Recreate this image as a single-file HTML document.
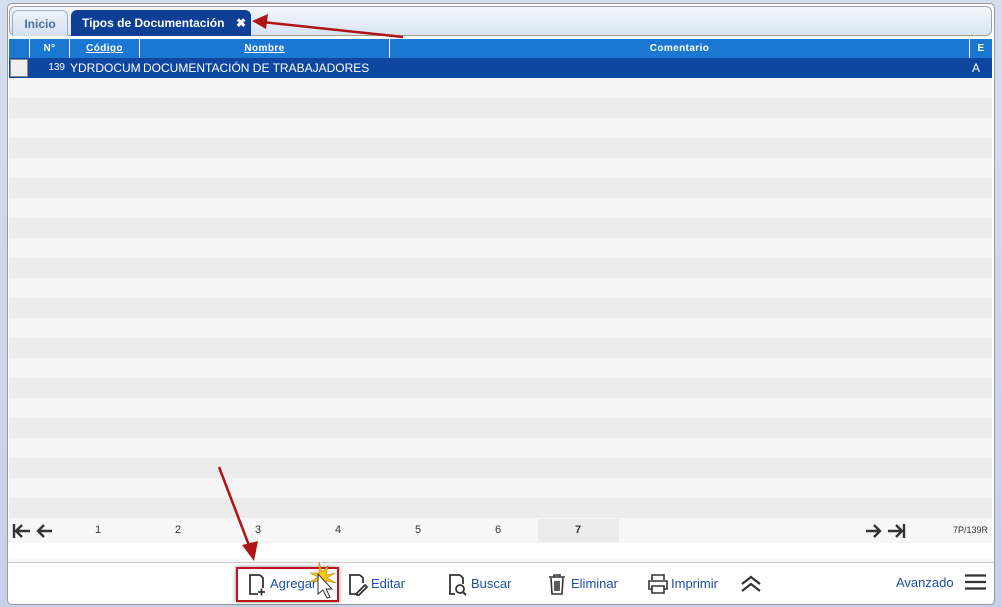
<!DOCTYPE html><html><head><style>
*{margin:0;padding:0;box-sizing:border-box}
body{width:1002px;height:607px;background:linear-gradient(#d5deef,#c5d1ea);font-family:"Liberation Sans",sans-serif;position:relative;overflow:hidden}
.panel{position:absolute;left:7px;top:3px;width:988px;height:602px;background:#fff;border:1px solid #999;border-radius:5px}
.tabbar{position:absolute;left:9px;top:6px;width:983px;height:30px;border:1px solid #a0a0a0;border-radius:6px;background:linear-gradient(#f4f7fc,#d8e4f3)}
.tab{position:absolute;top:10px;height:26px;border-radius:6px 6px 0 0;font-size:12px;font-weight:bold;line-height:26px}
.t1{left:12px;width:56px;background:linear-gradient(#eef3fa,#d3dff0);border:1px solid #9fb0c6;border-bottom:none;color:#4a6f9a;text-align:center}
.t2{left:71px;width:180px;background:#0d3f95;color:#fff;padding-left:11px}
.hdr{position:absolute;left:9px;top:39px;width:983px;height:19px;background:#1a77d2;color:#fff;font-size:10px;font-weight:bold;letter-spacing:.4px}
.hdr div,.sel div{position:absolute;top:0;height:19px;line-height:19px;text-align:center}
.hdr div{border-left:1px solid #fff}
.sel{position:absolute;left:9px;top:58px;width:983px;height:20px;background:#0d47a1;color:#fff;font-size:12px}
.sel div{line-height:20px}
.rows{position:absolute;left:9px;top:78px;width:983px;height:440px;background:repeating-linear-gradient(#f5f5f5 0 20px,#ececec 20px 40px)}
.pag{position:absolute;left:9px;top:518px;width:983px;height:25px;background:#f7f7f7;font-size:11px;color:#333}
.pag span{position:absolute;top:6px}
.tb{position:absolute;left:8px;top:562px;width:986px;height:1px;background:#ccc;box-shadow:0 -2px 3px #ddd}
.bt{position:absolute;top:576px;font-size:13px;color:#1c4fa8}
svg{position:absolute}
</style></head><body>
<div class="panel"></div>
<div class="tabbar"></div>
<div class="tab t1">Inicio</div>
<div class="tab t2">Tipos de Documentación<span style="position:absolute;left:165px">✖</span></div>
<svg width="1002" height="607" style="left:0;top:0;z-index:5"><line x1="403" y1="37" x2="262" y2="22" stroke="#b01515" stroke-width="2.5"/><polygon points="252,21 268,14 266,29" fill="#b01515"/>
<line x1="219" y1="467" x2="250" y2="548" stroke="#b01515" stroke-width="2.5"/><polygon points="254,561 242,545 258,541" fill="#b01515"/></svg>
<div class="hdr"><div style="left:20px;width:40px">N°</div><div style="left:60px;width:70px;text-decoration:underline">Código</div><div style="left:130px;width:250px;text-decoration:underline">Nombre</div><div style="left:380px;width:580px">Comentario</div><div style="left:960px;width:23px">E</div></div>
<div class="sel"><div style="left:1px;top:1px;width:18px;height:18px;background:#eee;border:1px solid #888"></div><div style="left:20px;width:36px;text-align:right;font-size:10px">139</div><div style="left:61px">YDRDOCUM</div><div style="left:134px">DOCUMENTACIÓN DE TRABAJADORES</div><div style="left:963px">A</div></div>
<div class="rows"></div>
<div class="pag">
<svg style="left:3px;top:4px" width="46" height="18"><path d="M2 2v14M4 9h14M10 3L4 9l6 6M26 9h14M32 3l-6 6 6 6" fill="none" stroke="#333" stroke-width="2.4"/></svg>
<span style="left:86px">1</span><span style="left:166px">2</span><span style="left:246px">3</span><span style="left:326px">4</span><span style="left:406px">5</span><span style="left:486px">6</span>
<div style="position:absolute;left:529px;top:1px;width:81px;height:23px;background:#ebebeb"></div><span style="left:566px;font-weight:bold">7</span>
<svg style="left:855px;top:4px" width="46" height="18"><path d="M2 9h14M10 3l6 6-6 6M24 9h14M32 3l6 6-6 6M40 2v14" fill="none" stroke="#333" stroke-width="2.4"/></svg>
<span style="left:944px;top:7px;font-size:9px">7P/139R</span></div>
<div class="tb"></div>
<div style="position:absolute;left:236px;top:567px;width:103px;height:35px;border:2px solid #c0141c;box-shadow:0 0 4px #888"></div>
<svg style="left:247px;top:573px" width="20" height="24"><path d="M13 2H3v19h8M13 2l3 3v10M11 19h7M14.5 15.5v7" fill="none" stroke="#333" stroke-width="1.8"/></svg>
<span class="bt" style="left:270px">Agregar</span>
<svg style="left:306px;top:560px" width="34" height="42"><path d="M13 2l3 10 6-6-2 9 9-2-8 5 9 5-10-2 3 9-6-7-5 8 1-10-9 1 8-5-8-4 9 0z" fill="#f5c518" stroke="#c08000" stroke-width=".6"/><path d="M12 14v20l5-4 4 8 3-1-4-8h6z" fill="#fff" stroke="#333"/></svg>
<svg style="left:347px;top:573px" width="22" height="24"><path d="M13 2H3v19h6M13 2l3 3v5M10 20l8-8 2 2-8 8h-2z" fill="none" stroke="#333" stroke-width="1.8"/></svg>
<span class="bt" style="left:371px">Editar</span>
<svg style="left:447px;top:573px" width="22" height="24"><path d="M13 2H3v19h5M13 2l3 3v6" fill="none" stroke="#333" stroke-width="1.8"/><circle cx="13" cy="16" r="4" fill="none" stroke="#333" stroke-width="1.8"/><path d="M16 19l3 3" stroke="#333" stroke-width="2"/></svg>
<span class="bt" style="left:471px">Buscar</span>
<svg style="left:547px;top:573px" width="20" height="22"><path d="M2 4h16M7 4V2h6v2M4 5l1 16h10l1-16M8 8v10M10 8v10M12 8v10" fill="none" stroke="#333" stroke-width="1.6"/></svg>
<span class="bt" style="left:571px">Eliminar</span>
<svg style="left:647px;top:573px" width="22" height="22"><path d="M5 7V2h12v5M5 16H2V8h18v8h-3M5 13h12v7H5z" fill="none" stroke="#333" stroke-width="1.6"/></svg>
<span class="bt" style="left:671px">Imprimir</span>
<svg style="left:740px;top:574px" width="22" height="20"><path d="M2 10l9-7 9 7M2 17l9-7 9 7" fill="none" stroke="#333" stroke-width="2.2"/></svg>
<span class="bt" style="left:896px;top:575px">Avanzado</span>
<svg style="left:965px;top:574px" width="22" height="16"><path d="M0 1.5h21M0 8h21M0 14.5h21" stroke="#333" stroke-width="2.2"/></svg>
</body></html>
